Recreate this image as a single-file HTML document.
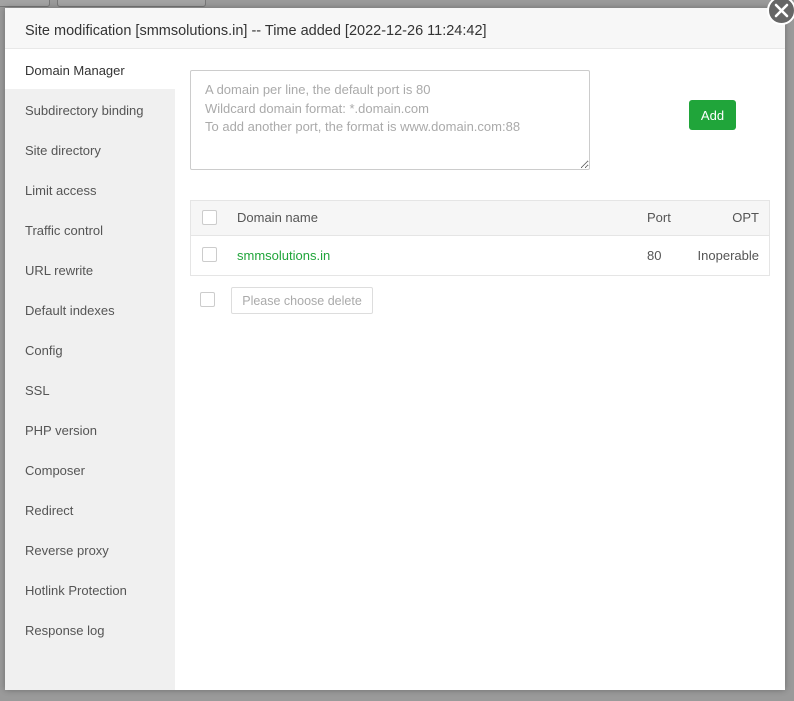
<!DOCTYPE html>
<html><head><meta charset="utf-8"><style>
*{box-sizing:border-box;margin:0;padding:0}
body{width:794px;height:701px;background:#9a9a9a;font-family:"Liberation Sans",sans-serif;position:relative;overflow:hidden;font-size:13px;color:#555}
.topbtn{position:absolute;top:-10px;height:17px;border:1px solid #777;border-radius:3px;background:#a3a3a3}
.modal{position:absolute;left:5px;top:8px;width:780px;height:682px;background:#fff;box-shadow:0 0 6px rgba(0,0,0,.3)}
.hdr{height:41px;background:#f7f7f7;border-bottom:1px solid #e8e8e8;padding-left:20px;padding-top:3px;line-height:41px;font-size:14.5px;color:#333}
.side{position:absolute;left:0;top:41px;width:170px;bottom:0;background:#f0f0f0}
.side div{height:40px;line-height:44px;padding-left:20px;font-size:13px;color:#555}
.side div.act{background:#fff;color:#333}
.close{position:absolute;left:767px;top:-4px;width:29px;height:29px;border-radius:50%;background:#666;border:2px solid #fff;z-index:5}
textarea{position:absolute;left:185px;top:62px;width:400px;height:100px;border:1px solid #ccc;border-radius:2px;padding:10px 14px;font-family:inherit;font-size:13px;line-height:18.5px;color:#aaa;resize:both;background:#fff}
.add{position:absolute;left:684px;top:92px;width:47px;height:30px;background:#20a53a;color:#fff;border-radius:3px;text-align:center;line-height:31px;font-size:13px}
.tbl{position:absolute;left:185px;top:192px;width:580px;border:1px solid #e5e5e5}
.row{height:39px;position:relative;line-height:39px}
.row.h{background:#f6f6f6;border-bottom:1px solid #e5e5e5;height:35px;line-height:34px}
.cb{position:absolute;left:11px;top:11px;width:15px;height:15px;border:1px solid #ccc;border-radius:2px;background:#fff}
.row.h .cb{top:9px}
.c1{position:absolute;left:46px}
.c2{position:absolute;left:456px}
.c3{position:absolute;right:10px}
.del{position:absolute;left:226px;top:279px;width:142px;height:27px;border:1px solid #ddd;border-radius:2px;line-height:26px;text-align:center;color:#aaa;font-size:12.5px}
</style></head><body>
<div class="topbtn" style="left:-5px;width:55px"></div>
<div class="topbtn" style="left:57px;width:149px"></div>
<div class="modal">
<div class="hdr">Site modification [smmsolutions.in] -- Time added [2022-12-26 11:24:42]</div>
<div class="side">
<div class="act">Domain Manager</div><div>Subdirectory binding</div><div>Site directory</div><div>Limit access</div><div>Traffic control</div><div>URL rewrite</div><div>Default indexes</div><div>Config</div><div>SSL</div><div>PHP version</div><div>Composer</div><div>Redirect</div><div>Reverse proxy</div><div>Hotlink Protection</div><div>Response log</div>
</div>
<textarea>A domain per line, the default port is 80
Wildcard domain format: *.domain.com
To add another port, the format is www.domain.com:88</textarea>
<div class="add">Add</div>
<div class="tbl">
<div class="row h"><span class="cb"></span><span class="c1">Domain name</span><span class="c2">Port</span><span class="c3">OPT</span></div>
<div class="row"><span class="cb"></span><span class="c1" style="color:#20a53a">smmsolutions.in</span><span class="c2">80</span><span class="c3">Inoperable</span></div>
</div>
<span class="cb" style="position:absolute;left:195px;top:284px"></span>
<div class="del">Please choose delete</div>
</div>
<div class="close"><svg width="25" height="25" viewBox="0 0 25 25"><path d="M7 7L18 18M18 7L7 18" stroke="#fff" stroke-width="2.6" stroke-linecap="round"/></svg></div>
</body></html>
